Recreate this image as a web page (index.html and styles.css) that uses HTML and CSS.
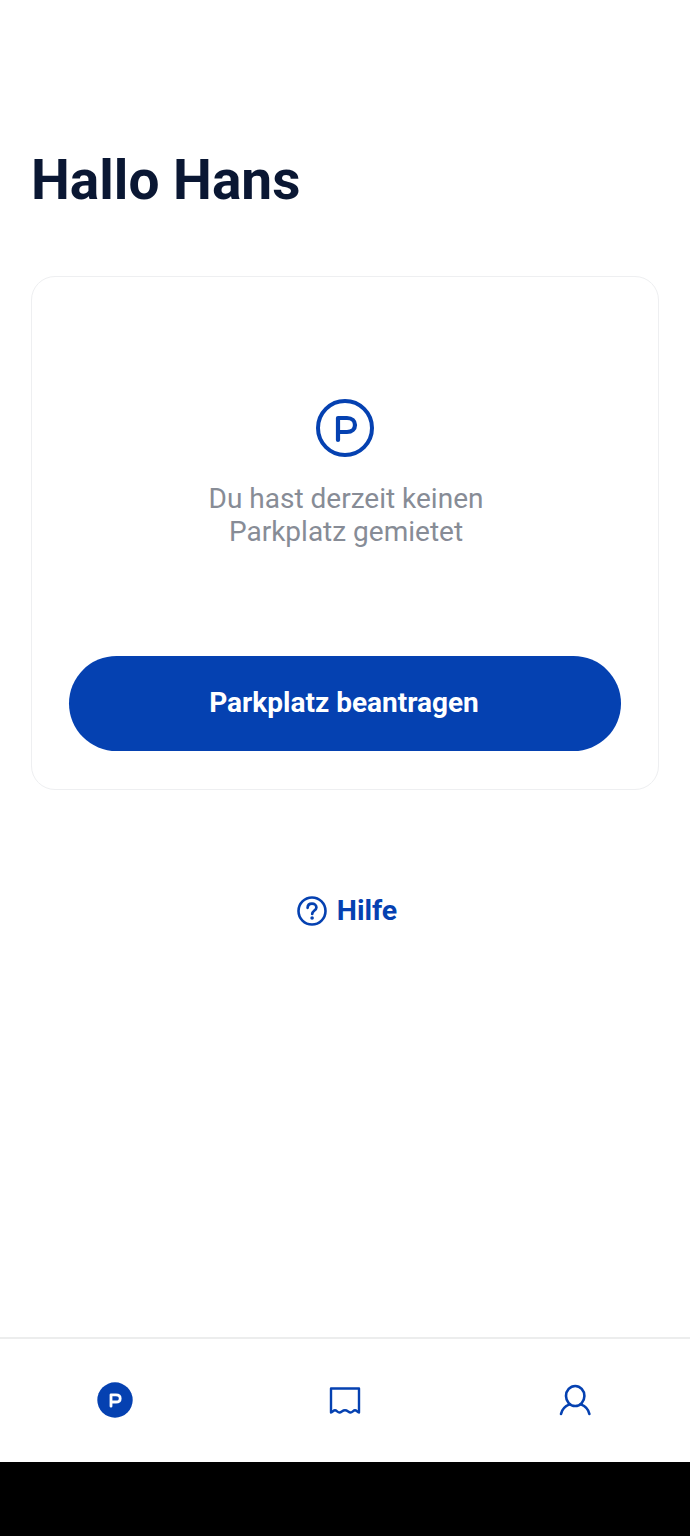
FILE: index.html
```html
<!DOCTYPE html>
<html lang="de">
<head>
    <meta charset="UTF-8">
    <title>Hallo Hans</title>
    <link rel="stylesheet" href="styles.css">
</head>
<body>
    <div class="screen">
        <main class="content">
            <h1 class="greeting">Hallo Hans</h1>
            <section class="card">
                <div class="empty-state">
                    <svg class="empty-icon" viewBox="0 0 58 58" fill="none" stroke="#0541b1">
                        <circle cx="29" cy="29" r="27" stroke-width="4"/>
                        <path d="M22 41V19H31C36 19 39 22.2 39 26C39 29.8 36 33 31 33H22" stroke-width="4.2" stroke-linecap="round" stroke-linejoin="round"/>
                    </svg>
                    <p class="empty-text">Du hast derzeit keinen<br>Parkplatz gemietet</p>
                </div>
                <button class="primary-btn" type="button">Parkplatz beantragen</button>
            </section>
            <a class="help-link" href="#">
                <svg class="help-icon" viewBox="0 0 30 30" fill="none" stroke="#0541b1">
                    <circle cx="15" cy="15" r="13.5" stroke-width="2.6"/>
                    <path d="M10.6 11.8C10.7 9.2 12.6 7.6 15 7.6C17.5 7.6 19.4 9.2 19.4 11.4C19.4 14.4 15.2 14.6 15.2 18" stroke-width="2.7" stroke-linecap="round"/>
                    <circle cx="15.1" cy="22" r="1.8" fill="#0541b1" stroke="none"/>
                </svg>
                <span>Hilfe</span>
            </a>
        </main>
        <nav class="tab-bar">
            <a class="tab" href="#">
                <svg class="tab-icon" viewBox="0 0 36 36">
                    <circle cx="18" cy="18" r="17.7" fill="#0541b1"/>
                    <path d="M14 24.2V12.8H19C21.8 12.8 23.2 14.4 23.2 16.4C23.2 18.4 21.8 20 19 20H14" fill="none" stroke="#fff" stroke-width="2.8" stroke-linecap="round" stroke-linejoin="round"/>
                </svg>
            </a>
            <a class="tab" href="#">
                <svg class="tab-icon" viewBox="0 0 36 36" fill="none" stroke="#0541b1" stroke-width="2.4" stroke-linejoin="round" stroke-linecap="round">
                    <path d="M4 30.5V6.5H32V30.5C30.5 30.5 29.7 28.3 28 28.3C26.2 28.3 25.5 30.5 23.5 30.5C21.5 30.5 20.7 28.3 18 28.3C15.3 28.3 14.5 30.5 12.5 30.5C10.5 30.5 9.8 28.3 8 28.3C6.3 28.3 5.5 30.5 4 30.5Z"/>
                </svg>
            </a>
            <a class="tab" href="#">
                <svg class="tab-icon" viewBox="0 0 36 36" fill="none" stroke="#0541b1" stroke-width="2.6" stroke-linecap="round">
                    <ellipse cx="18.2" cy="14" rx="9.2" ry="10"/>
                    <path d="M4 32C5 27 8.4 24 12.5 22.4M32.4 32C31.4 27 28 24 23.9 22.4"/>
                </svg>
            </a>
        </nav>
        <div class="system-bar"></div>
    </div>
</body>
</html>
```

FILE: styles.css
```css
* { box-sizing: border-box; }
body { margin: 0; background: #fff; font-family: Roboto, sans-serif; }
.screen {
    display: flex;
    flex-direction: column;
    height: 1536px;
}
.content {
    flex: 1;
    padding: 148px 31px 0;
}
.greeting {
    margin: 0 0 64px;
    color: #0a1733;
    font-size: 55px;
    font-weight: 700;
    line-height: 64px;
}
.card {
    display: flex;
    flex-direction: column;
    height: 514px;
    padding: 0 37px 38px;
    border: 1px solid #eeeff1;
    border-radius: 24px;
}
.empty-state {
    flex: 1;
    display: flex;
    flex-direction: column;
    align-items: center;
    padding-top: 122px;
}
.empty-icon { width: 58px; height: 58px; }
.empty-text {
    margin: 25px 0 0;
    padding-left: 2px;
    color: #878c96;
    font-size: 28px;
    line-height: 33px;
    text-align: center;
}
.primary-btn {
    height: 95px;
    padding: 0 2px 2px 0;
    border: none;
    border-radius: 48px;
    background: #0541b1;
    color: #fff;
    font-family: inherit;
    font-size: 28px;
    font-weight: 700;
}
.help-link {
    display: flex;
    align-items: center;
    justify-content: center;
    gap: 10px;
    margin-top: 104px;
    padding-left: 4px;
    color: #0541b1;
    font-size: 28.5px;
    font-weight: 700;
    line-height: 34px;
    text-decoration: none;
}
.help-icon { width: 30px; height: 30px; }
.tab-bar {
    display: grid;
    grid-template-columns: repeat(3, 1fr);
    height: 125px;
    border-top: 2px solid #eceded;
}
.tab {
    display: flex;
    align-items: center;
    justify-content: center;
    padding-bottom: 1px;
}
.tab-icon { width: 36px; height: 36px; }
.system-bar { height: 74px; background: #000; }
```
